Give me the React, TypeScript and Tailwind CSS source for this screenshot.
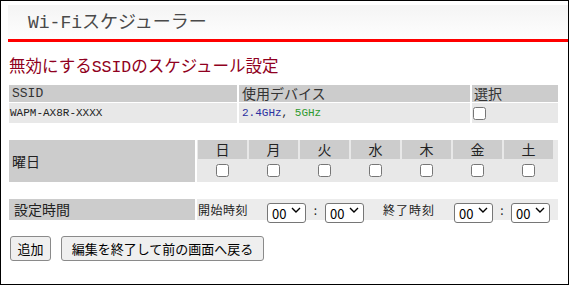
import React from 'react';

const DAYS = ['日', '月', '火', '水', '木', '金', '土'];

const sans = 'font-["Noto_Sans_CJK_JP","Noto_Sans",sans-serif]';
const mono = 'font-["Liberation_Mono","Noto_Sans_CJK_JP",monospace]';

const TimeSelect: React.FC = () => (
  <div className="relative w-[39px] h-[20px]">
    <select
      defaultValue="00"
      className={`appearance-none w-full h-full border border-[#767676] rounded-[3px] bg-white pl-[4px] text-[13px] leading-none text-black ${sans}`}
    >
      <option value="00">00</option>
    </select>
    <svg
      className="absolute right-[5px] top-[7px] pointer-events-none"
      width="10"
      height="6"
      viewBox="0 0 10 6"
      fill="none"
    >
      <path d="M1 1l4 4 4-4" stroke="#000" strokeWidth="1.4" />
    </svg>
  </div>
);

const App: React.FC = () => {
  return (
    <div className={`w-[569px] h-[285px] border border-black bg-white overflow-hidden ${sans}`}>
      {/* Title bar */}
      <div className="mt-[4px] ml-[7px] h-[37px] border-b-[3px] border-[#ff0000] bg-gradient-to-b from-[#f4f4f4] to-[#fefefe] flex items-center pl-[20px]">
        <h1 className={`text-[18px] leading-none text-[#4a4a4a] pt-[2px] ${mono}`}>Wi-Fiスケジューラー</h1>
      </div>

      <div className="ml-[8px] w-[549px]">
        <h2 className={`mt-[16px] h-[20px] text-[16.5px] leading-[20px] text-[#900020] ${mono}`}>
          無効にするSSIDのスケジュール設定
        </h2>

        {/* SSID table */}
        <div className="mt-[7px] grid grid-cols-[228px_231px_86px] gap-x-[2px] gap-y-[1px]">
          <div className={`h-[17px] bg-[#cccccc] pl-[3px] text-[13px] leading-[17px] text-[#333] ${mono}`}>SSID</div>
          <div className="h-[17px] bg-[#cccccc] pl-[3px] text-[14px] leading-[17px] text-[#333]">使用デバイス</div>
          <div className="h-[17px] bg-[#cccccc] pl-[2px] text-[14px] leading-[17px] text-[#333]">選択</div>
          <div className={`h-[20px] bg-[#e8e8e8] pl-[1px] text-[11px] leading-[20px] text-[#222] ${mono}`}>WAPM-AX8R-XXXX</div>
          <div className={`h-[20px] bg-[#e8e8e8] pl-[3px] text-[11px] leading-[20px] ${mono}`}>
            <span className="text-[#2a30a0]">2.4GHz</span>
            <span className="text-[#222]">, </span>
            <span className="text-[#2e9a2e]">5GHz</span>
          </div>
          <div className="h-[20px] bg-[#e8e8e8] pl-[1px] flex items-center">
            <input type="checkbox" className="m-0 w-[13px] h-[13px]" />
          </div>
        </div>

        {/* Day of week */}
        <div className="mt-[17px] flex gap-x-[2px] h-[42px]">
          <div className="w-[186px] bg-[#cccccc] pl-[3px] flex items-center text-[14px] text-[#222]">曜日</div>
          <div className="w-[361px] bg-[#e8e8e8] pl-[1px]">
            <div className="grid grid-cols-[repeat(7,49px)] gap-x-[2px]">
              {DAYS.map(d => (
                <div key={d} className="h-[19px] bg-[#cccccc] text-center text-[14px] leading-[19px] text-[#222]">
                  {d}
                </div>
              ))}
              {DAYS.map(d => (
                <div key={d + 'c'} className="h-[23px] flex items-center justify-center">
                  <input type="checkbox" className="m-0 w-[13px] h-[13px]" />
                </div>
              ))}
            </div>
          </div>
        </div>

        {/* Time */}
        <div className="mt-[17px] flex gap-x-[2px] h-[21px]">
          <div className="w-[186px] bg-[#cccccc] pl-[5px] flex items-center text-[14px] text-[#222]">設定時間</div>
          <div className="w-[361px] bg-[#ececec] pl-[1px] flex items-center">
            <span className="w-[69px] text-[12px] tracking-[0.5px] text-[#222]">開始時刻</span>
            <TimeSelect />
            <span className="w-[19px] text-center text-[12px] text-[#222]">:</span>
            <TimeSelect />
            <span className="ml-[19px] w-[71px] text-[12px] tracking-[1px] text-[#222]">終了時刻</span>
            <TimeSelect />
            <span className="w-[18px] text-center text-[12px] text-[#222]">:</span>
            <TimeSelect />
          </div>
        </div>

        {/* Buttons */}
        <div className="mt-[16px] flex gap-x-[10px] pl-[1px]">
          <button className="w-[41px] h-[25px] bg-[#efefef] border border-[#8a8a8a] rounded-[3px] text-[13px] leading-none text-black">
            追加
          </button>
          <button className="w-[203px] h-[25px] bg-[#efefef] border border-[#8a8a8a] rounded-[3px] text-[13px] leading-none text-black">
            編集を終了して前の画面へ戻る
          </button>
        </div>
      </div>
    </div>
  );
};

export default App;
